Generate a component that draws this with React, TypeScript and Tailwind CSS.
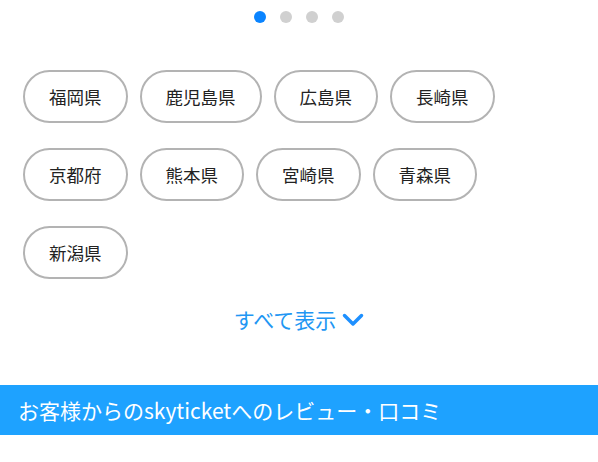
import React from "react";

const rows = [
  ["福岡県", "鹿児島県", "広島県", "長崎県"],
  ["京都府", "熊本県", "宮崎県", "青森県"],
  ["新潟県"],
];

export default function App() {
  return (
    <div
      className="w-[598px] h-[462px] bg-white overflow-hidden"
      style={{ fontFamily: '"Noto Sans CJK JP", "Noto Sans", sans-serif' }}
    >
      <div className="flex justify-center gap-[14px] pt-[11px]">
        <span className="w-[12px] h-[12px] rounded-full bg-[#0a84ff]" />
        <span className="w-[12px] h-[12px] rounded-full bg-[#d0d0d0]" />
        <span className="w-[12px] h-[12px] rounded-full bg-[#d0d0d0]" />
        <span className="w-[12px] h-[12px] rounded-full bg-[#d0d0d0]" />
      </div>
      <div className="flex flex-col gap-[25px] pl-[23px] pt-[47px]">
        {rows.map((r, i) => (
          <div key={i} className="flex gap-[12px]">
            {r.map((p) => (
              <div
                key={p}
                className="h-[53px] px-[24px] flex items-center justify-center rounded-full border-2 border-[#b3b3b3] text-[17.5px] text-[#222] leading-none"
              >
                {p}
              </div>
            ))}
          </div>
        ))}
      </div>
      <div className="flex justify-center items-center gap-[6px] pt-[30px] text-[21px] text-[#2196f3] leading-none">
        <span>すべて表示</span>
        <svg width="22" height="14" viewBox="0 0 22 14" fill="none">
          <path d="M2.5 2.5 L11 11 L19.5 2.5" stroke="#1e90ff" strokeWidth="3.5" strokeLinecap="round" strokeLinejoin="round" />
        </svg>
      </div>
      <div className="mt-[55px] h-[50px] bg-[#1ea2ff] flex items-center pl-[18px] text-white text-[21px] leading-none">
        お客様からのskyticketへのレビュー・口コミ
      </div>
    </div>
  );
}
